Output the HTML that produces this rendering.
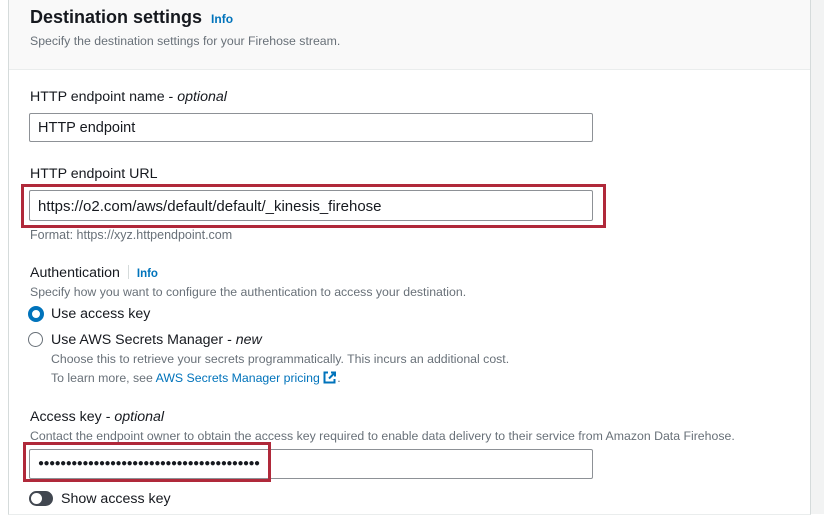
<!DOCTYPE html>
<html><head><style>
body{margin:0;width:824px;height:524px;background:#fff;font-family:"Liberation Sans",sans-serif;color:#16191f;position:relative;overflow:hidden}
.a{position:absolute;white-space:nowrap}
.panel{position:absolute;left:8px;top:-2px;width:801px;height:516px;border-left:1px solid #d5dbdb;border-right:1px solid #d5dbdb;border-bottom:1px solid #eaeded;background:#fff}
.hdr{position:absolute;left:9px;top:0;width:801px;height:69px;background:#f9f9f9;border-bottom:1px solid #eaeded}
.rt{position:absolute;left:810px;top:0;width:14px;height:514px;background:#f2f3f3}
.inp{position:absolute;left:29px;width:564px;height:29px;border:1px solid #8d9196;border-radius:2px;background:#fff;font-size:14.5px;line-height:29px;padding-left:8px;box-sizing:border-box}
.red{position:absolute;border:3px solid #b0293a}
.lab{font-size:14.2px}
.desc{font-size:12.3px;color:#687078}
.info{color:#0073bb;font-weight:bold;font-size:11.5px}
</style></head><body>
<div class="rt"></div>
<div class="panel"></div>
<div class="hdr"></div>
<div class="a" style="left:30px;top:7px;font-size:18px;font-weight:bold">Destination settings <span class="info" style="font-size:12px;margin-left:4px">Info</span></div>
<div class="a desc" style="left:30px;top:34px">Specify the destination settings for your Firehose stream.</div>

<div class="a lab" style="left:30px;top:89px">HTTP endpoint name - <i>optional</i></div>
<div class="inp" style="top:113px">HTTP endpoint</div>

<div class="a lab" style="left:30px;top:166px">HTTP endpoint URL</div>
<div class="inp" style="top:190px;height:31px;line-height:31px;font-size:15px">https://o2.com/aws/default/default/_kinesis_firehose</div>
<div class="red" style="left:21px;top:184px;width:579px;height:38px"></div>
<div class="a desc" style="left:30px;top:228px;font-size:12.5px">Format: https://xyz.httpendpoint.com</div>

<div class="a lab" style="left:30px;top:265px">Authentication <span style="display:inline-block;width:1px;height:14px;background:#d5dbdb;margin:0 8px -2px 4px"></span><span class="info">Info</span></div>
<div class="a desc" style="left:30px;top:285px">Specify how you want to configure the authentication to access your destination.</div>
<div class="a" style="left:28px;top:306px;width:8px;height:8px;border:4.5px solid #0073bb;border-radius:50%"></div>
<div class="a lab" style="left:51px;top:306px">Use access key</div>
<div class="a" style="left:28px;top:332px;width:13px;height:13px;border:1px solid #687078;border-radius:50%"></div>
<div class="a lab" style="left:51px;top:332px">Use AWS Secrets Manager - <i>new</i></div>
<div class="a desc" style="left:51px;top:352px">Choose this to retrieve your secrets programmatically. This incurs an additional cost.</div>
<div class="a desc" style="left:51px;top:371px">To learn more, see <span style="color:#0073bb">AWS Secrets Manager pricing</span> <svg width="14" height="13" viewBox="0 0 14 13" style="vertical-align:-2px"><path d="M5 1.5H1.5v10h10V8" fill="none" stroke="#0073bb" stroke-width="2"/><path d="M8 1.5h4v4M12 1.5L6 7.5" fill="none" stroke="#0073bb" stroke-width="2"/></svg>.</div>

<div class="a lab" style="left:30px;top:409px">Access key - <i>optional</i></div>
<div class="a desc" style="left:30px;top:429px">Contact the endpoint owner to obtain the access key required to enable data delivery to their service from Amazon Data Firehose.</div>
<div class="inp" style="top:449px;height:30px;line-height:28px;font-size:10px;letter-spacing:-0.5px">●●●●●●●●●●●●●●●●●●●●●●●●●●●●●●●●●●●●●●●●</div>
<div class="red" style="left:23px;top:442px;width:242px;height:34px"></div>
<div class="a" style="left:29px;top:491px;width:24px;height:15px;border-radius:8px;background:#414750"><div style="position:absolute;left:2px;top:2px;width:11px;height:11px;border-radius:50%;background:#fff"></div></div>
<div class="a lab" style="left:61px;top:491px">Show access key</div>
</body></html>
